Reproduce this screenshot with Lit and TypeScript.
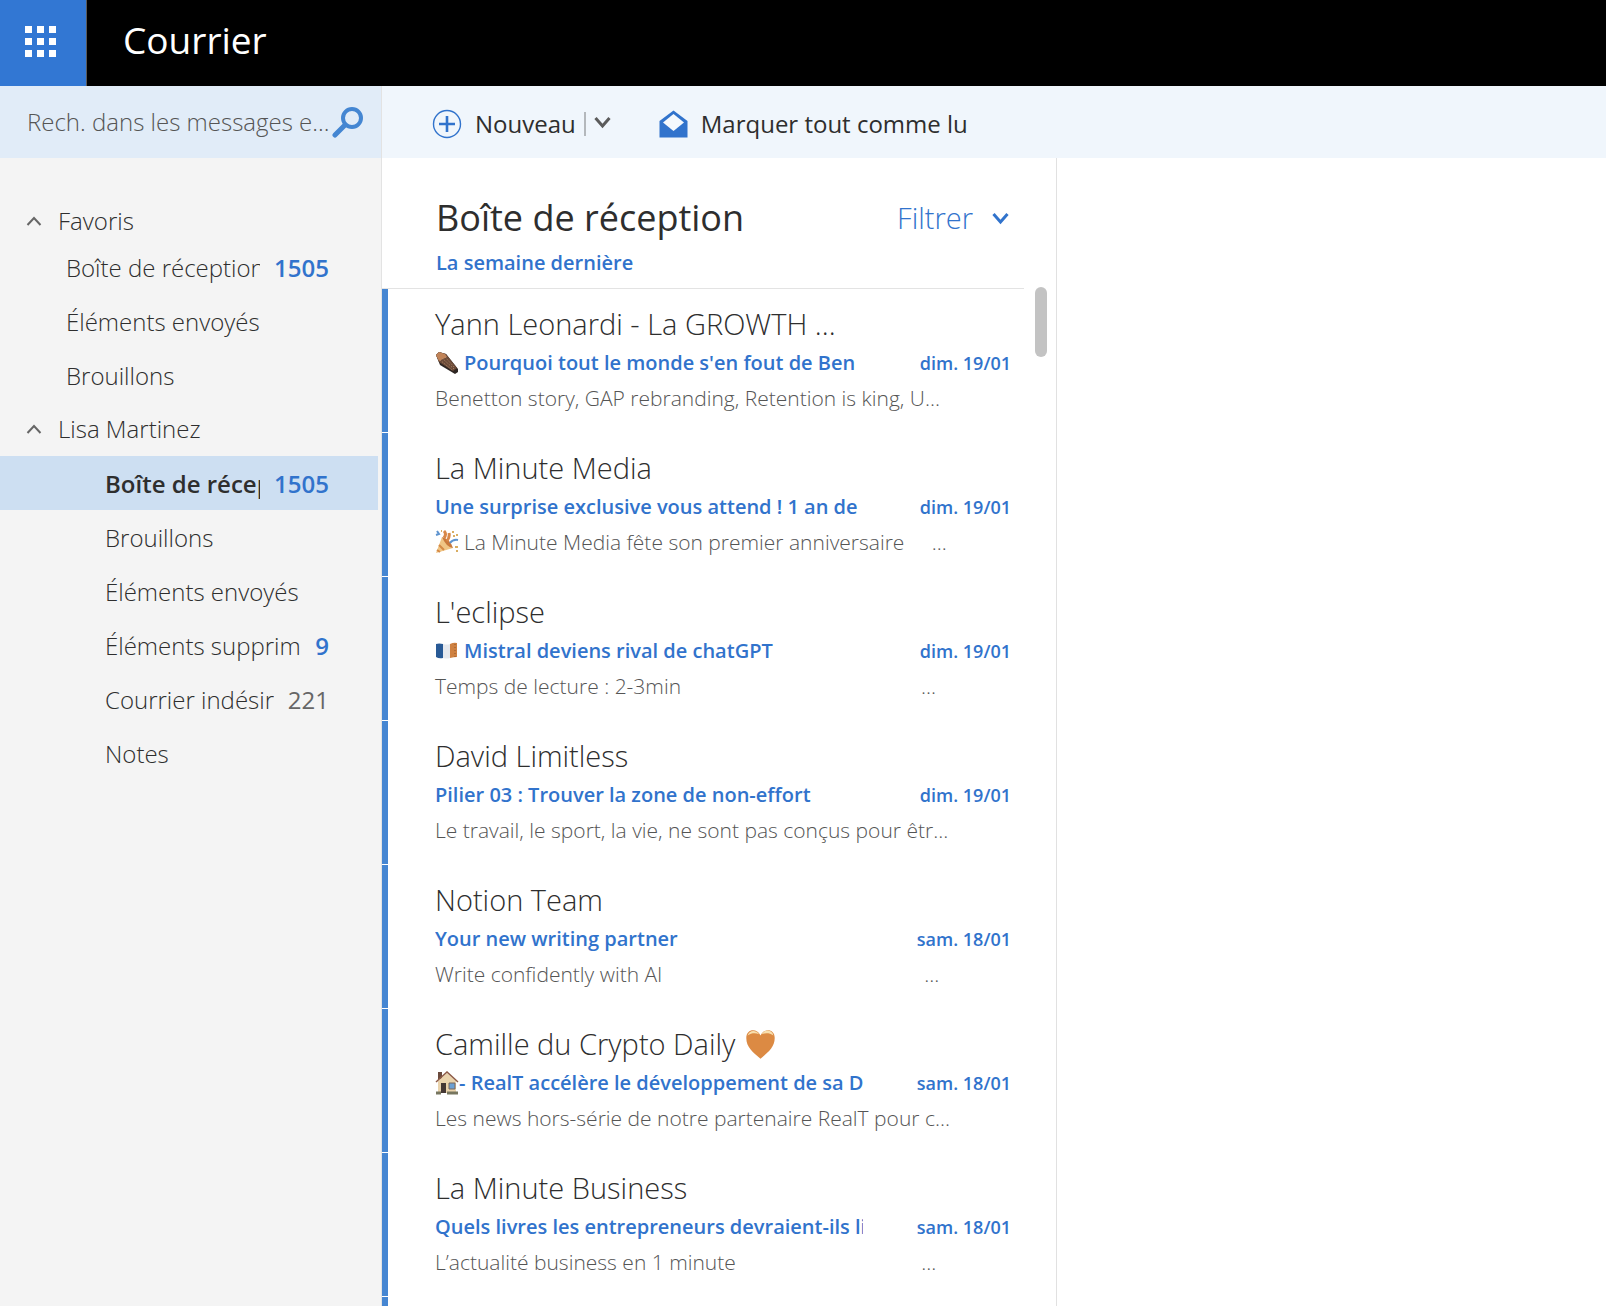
import { LitElement, html, css, svg, nothing } from "lit";
import { customElement } from "lit/decorators.js";
import { classMap } from "lit/directives/class-map.js";

type Emoji = "coffin" | "party" | "flag" | "house" | "heart";

interface Folder {
  label: string;
  count?: number;
  muted?: boolean;
  selected?: boolean;
}

interface Mail {
  sender: string;
  senderEmoji?: Emoji;
  subject: string;
  subjectEmoji?: Emoji;
  preview: string;
  previewEmoji?: Emoji;
  pad?: number;
  date: string;
}

const favourites: Folder[] = [
  { label: "Boîte de réception", count: 1505 },
  { label: "Éléments envoyés" },
  { label: "Brouillons" },
];

const account: Folder[] = [
  { label: "Boîte de réception", count: 1505, selected: true },
  { label: "Brouillons" },
  { label: "Éléments envoyés" },
  { label: "Éléments supprimés", count: 9 },
  { label: "Courrier indésirable", count: 221, muted: true },
  { label: "Notes" },
];

const mails: Mail[] = [
  {
    sender: "Yann Leonardi - La GROWTH ...",
    subjectEmoji: "coffin",
    subject: "Pourquoi tout le monde s'en fout de Ben",
    preview: "Benetton story, GAP rebranding, Retention is king, U...",
    date: "dim. 19/01",
  },
  {
    sender: "La Minute Media",
    subject: "Une surprise exclusive vous attend ! 1 an de",
    previewEmoji: "party",
    preview: "La Minute Media fête son premier anniversaire",
    pad: 5,
    date: "dim. 19/01",
  },
  {
    sender: "L'eclipse",
    subjectEmoji: "flag",
    subject: "Mistral deviens rival de chatGPT",
    preview: "Temps de lecture : 2-3min",
    pad: 44,
    date: "dim. 19/01",
  },
  {
    sender: "David Limitless",
    subject: "Pilier 03 : Trouver la zone de non-effort",
    preview: "Le travail, le sport, la vie, ne sont pas conçus pour êtr...",
    date: "dim. 19/01",
  },
  {
    sender: "Notion Team",
    subject: "Your new writing partner",
    preview: "Write confidently with AI",
    pad: 48,
    date: "sam. 18/01",
  },
  {
    sender: "Camille du Crypto Daily",
    senderEmoji: "heart",
    subjectEmoji: "house",
    subject: "- RealT accélère le développement de sa DAO",
    preview: "Les news hors-série de notre partenaire RealT pour c...",
    date: "sam. 18/01",
  },
  {
    sender: "La Minute Business",
    subject: "Quels livres les entrepreneurs devraient-ils lire",
    preview: "L’actualité business en 1 minute",
    pad: 34,
    date: "sam. 18/01",
  },
];

const emojiArt = {
  coffin: svg`
    <path d="M1 4 L4 1 L11 3 L23 18 L23 21 L20 23 L5 14 Z" fill="#2d2522"/>
    <path d="M1 4 L4 1 L11 3 L22 17 L18 20 L4 11 Z" fill="#6b4a38"/>
    <path d="M1 4 L4 1 L10 3 L12 6 L4 10 Z" fill="#c08358"/>
    <path d="M5 9 L17 19 M7 7 L19 18 M10 6 L20 17" stroke="#b8906f" stroke-width="1" stroke-dasharray="1 1.5"/>`,
  party: svg`
    <path d="M1 23 L7 7 L18 18 Z" fill="#f0c585"/>
    <path d="M7 7 Q15 9 18 18 Q11 17 7 7 Z" fill="#c9793c"/>
    <path d="M4 15 L9 20 M2 20 L5 22" stroke="#d58a45" stroke-width="2"/>
    <path d="M9 8 Q12 4 9 1 M12 11 Q15 7 14 3" stroke="#d88748" stroke-width="3" fill="none"/>
    <path d="M15 13 Q18 9 23 10 M2 1 L4 4 L1 5" stroke="#5f94cf" stroke-width="2" fill="none"/>
    <path d="M17 2 h2 M21 5 h2 M18 6 h2 M20 17 h3 M21 21 h2 M6 1 h1" stroke="#d9ad62" stroke-width="2"/>`,
  flag: svg`
    <path d="M1 5 Q4 4 8 5 L8 19 Q4 20 1 18 Z" fill="#285a96"/>
    <path d="M8 5 Q12 6 15 5 L15 19 Q12 20 8 19 Z" fill="#e6e9ee"/>
    <path d="M15 5 Q19 3 22 4 L22 18 Q19 18 15 19 Z" fill="#cf8141"/>
    <path d="M20 5 V18" stroke="#8f572e" stroke-width="1" stroke-dasharray="1 2"/>`,
  house: svg`
    <path d="M3 1 h4 v7 h-4 Z" fill="#6a4a3d"/>
    <path d="M3 10 L12 2 L21 10 V22 H3 Z" fill="#ead3ac"/>
    <path d="M1 11 L12 1 L23 11" fill="none" stroke="#8d5a45" stroke-width="1.500"/>
    <path d="M6 12 h5 v10 h-5 Z" fill="#453834"/>
    <path d="M14 12 h6 v6 h-6 Z" fill="#6c9fd2" stroke="#7a675c"/>
    <path d="M1 22 h5 M12 22 h11" stroke="#77765f" stroke-width="3"/>`,
  heart: svg`
    <path d="M12 23 C6 18 1 14 1 7 C1 0 9 -1 12 5 C15 -1 23 0 23 7 C23 14 18 18 12 23 Z" fill="#dc8a43"/>
    <path d="M2 5 C3 1 8 0 11 4 C8 3 5 3 2 5 Z M13 4 C15 0 21 0 22 5 C19 3 16 3 13 4 Z" fill="#f8dfae"/>`,
};

const emoji = (name: Emoji | undefined) =>
  name
    ? html`<svg class="emoji ${name}" viewBox="0 0 24 24" aria-hidden="true">${emojiArt[name]}</svg>`
    : nothing;

const chevron = (up: boolean) => html`
  <svg class="chevron" viewBox="0 0 16 16" aria-hidden="true">
    <path d=${up ? "M1.500 12 L8 5 L14.500 12" : "M1 4 L8 12 L15 4"} />
  </svg>`;

@customElement("app-root")
export class AppRoot extends LitElement {
  static styles = css`
    :host {
      --blue: #3173cc;
      --ink: #2e2e2e;
      display: flex;
      flex-direction: column;
      height: 100vh;
      overflow: hidden;
      background: #fff;
      color: var(--ink);
      font-family: "Open Sans", "Noto Sans", sans-serif;
      font-weight: 300;
    }
    * { box-sizing: border-box; }
    button {
      border: 0;
      padding: 0;
      background: none;
      color: inherit;
      font: inherit;
      display: flex;
      align-items: center;
      cursor: pointer;
    }
    a { color: inherit; text-decoration: none; }
    h1, h2, h3, ul, p { margin: 0; padding: 0; font-weight: inherit; }
    ul { list-style: none; }
    svg { display: block; flex: none; fill: none; }

    .top { display: flex; flex: none; height: 86px; background: #000; color: #fff; }
    .launcher { width: 87px; justify-content: center; padding: 0 5px 4px 0; background: #3277d3; border-right: 1px solid #5a5a5a; }
    .launcher svg { width: 31px; height: 31px; fill: #fff; }
    .brand { padding: 0 36px; font-size: 37px; line-height: 80px; font-weight: 400; }

    .body { display: flex; flex: 1; min-height: 0; }
    .side { display: flex; flex-direction: column; flex: none; width: 382px; background: #f4f4f4; border-right: 1px solid #e3e3e3; }
    .search { display: flex; flex: none; align-items: center; height: 72px; padding: 0 18px 0 27px; background: #e1ecf8; }
    .search input {
      flex: 1; min-width: 0; border: 0; padding: 0 0 2px; outline: 0; background: none;
      font: inherit; font-size: 24px; color: var(--ink);
    }
    .search input::placeholder { color: #555; opacity: 1; }
    .search svg { width: 31px; height: 31px; stroke: #4486d2; }

    .folders { padding-top: 43px; font-size: 24px; line-height: 56px; }
    .group { gap: 16px; width: 100%; height: 54px; padding-left: 26px; }
    .group.first { height: 39px; }
    .folders .chevron { width: 16px; height: 16px; stroke: #666; stroke-width: 2; }
    .folder { display: flex; gap: 14px; height: 54px; margin-right: 3px; padding: 0 49px 0 66px; }
    .nested .folder { padding-left: 105px; }
    .folder.selected { background: #cddff2; }
    .label { flex: 1; overflow: hidden; white-space: nowrap; }
    .selected .label { font-weight: 600; }
    .count { color: var(--blue); font-weight: 600; }
    .count.muted { color: #666; font-weight: 400; }

    .main { display: flex; flex-direction: column; flex: 1; min-width: 0; }
    .bar { display: flex; flex: none; align-items: center; height: 72px; padding: 3px 50px 0; background: #f0f6fc; font-size: 24px; font-weight: 400; }
    .tool { gap: 13px; }
    .new { padding-right: 8px; }
    .more { padding: 0 48px 4px 8px; }
    .more .chevron { width: 17px; height: 16px; stroke: #5b5b5b; stroke-width: 3; }
    .split { width: 2px; height: 24px; background: #b4b8bc; }
    .plus { width: 30px; height: 30px; stroke: var(--blue); }
    .open { width: 29px; height: 28px; }

    .panes { display: flex; flex: 1; min-height: 0; }
    .list { display: flex; flex: none; width: 675px; border-right: 1px solid #e1e1e1; }
    .column { display: flex; flex-direction: column; flex: 1; min-width: 0; }
    .head { display: flex; flex: none; justify-content: space-between; align-items: center; height: 82px; padding: 38px 15px 0 54px; }
    .head h2 { font-size: 36px; line-height: 44px; font-weight: 400; }
    .filter { gap: 19px; font-size: 29px; line-height: 44px; color: var(--blue); }
    .filter .chevron { width: 17px; height: 16px; stroke: var(--blue); stroke-width: 3; }
    .period { flex: none; height: 49px; padding: 7px 54px; border-bottom: 1px solid #e3e3e3; font-size: 20px; line-height: 32px; font-weight: 600; color: var(--blue); }
    .scroll { flex: none; width: 32px; padding: 129px 9px 0 11px; }
    .thumb { height: 70px; border-radius: 6px; background: #c3c3c3; }

    .mails { display: flex; flex-direction: column; flex: 1; min-height: 0; overflow: hidden; }
    .mail { flex: none; height: 144px; padding-bottom: 1px; }
    .card { display: block; height: 143px; padding: 14px 13px 0 47px; border-left: 6px solid #4686d2; white-space: nowrap; overflow: hidden; }
    .next { flex: 1; border-left: 6px solid #4686d2; }
    .sender { display: flex; align-items: center; gap: 10px; font-size: 29px; line-height: 42px; }
    .line { display: flex; justify-content: space-between; align-items: center; font-size: 20px; line-height: 36px; font-weight: 600; color: var(--blue); }
    .subject { display: flex; align-items: center; gap: 5px; flex: none; width: 428px; overflow: hidden; }
    .date { font-size: 18px; }
    .preview { display: flex; align-items: center; gap: 5px; font-size: 21px; line-height: 34px; color: #555; }
    .emoji { width: 24px; height: 24px; }
    .emoji.heart { width: 31px; height: 31px; }
    .emoji.house { margin-right: -5px; }
    .reading { flex: 1; min-width: 0; }
  `;

  private folder(f: Folder) {
    return html`
      <li>
        <a href="#" class=${classMap({ folder: true, selected: !!f.selected })}>
          <span class="label">${f.label}</span>
          ${f.count
            ? html`<span class=${classMap({ count: true, muted: !!f.muted })}>${f.count}</span>`
            : nothing}
        </a>
      </li>`;
  }

  private mail(m: Mail) {
    return html`
      <li class="mail">
        <a class="card" href="#">
          <h3 class="sender"><span>${m.sender}</span>${emoji(m.senderEmoji)}</h3>
          <div class="line">
            <span class="subject">${emoji(m.subjectEmoji)}<span>${m.subject}</span></span>
            <span class="date">${m.date}</span>
          </div>
          <p class="preview">
            ${emoji(m.previewEmoji)}<span>${m.preview}${m.pad ? "\u00a0".repeat(m.pad) + "..." : ""}</span>
          </p>
        </a>
      </li>`;
  }

  render() {
    return html`
      <header class="top">
        <button class="launcher" aria-label="Lanceur d’applications">
          <svg viewBox="0 0 31 31">
            ${[0, 12, 24].map((y) => [0, 12, 24].map((x) => svg`<rect x=${x} y=${y} width="7" height="7"/>`))}
          </svg>
        </button>
        <h1 class="brand">Courrier</h1>
      </header>
      <div class="body">
        <aside class="side">
          <form class="search" role="search">
            <input type="text" aria-label="Rechercher" placeholder="Rech. dans les messages e..." />
            <button type="button" aria-label="Lancer la recherche">
              <svg viewBox="0 0 31 31" stroke-width="4" stroke-linecap="round">
                <circle cx="20" cy="11" r="9" />
                <path d="M13 18 L3 28" stroke-width="5" />
              </svg>
            </button>
          </form>
          <nav class="folders">
            <button class="group first">${chevron(true)}<span>Favoris</span></button>
            <ul>${favourites.map((f) => this.folder(f))}</ul>
            <button class="group">${chevron(true)}<span>Lisa Martinez</span></button>
            <ul class="nested">${account.map((f) => this.folder(f))}</ul>
          </nav>
        </aside>
        <main class="main">
          <div class="bar">
            <button class="tool new">
              <svg class="plus" viewBox="0 0 30 30">
                <circle cx="15" cy="15" r="13.500" stroke-width="1.400" />
                <path d="M7 15 H23 M15 7 V23" stroke-width="2.600" />
              </svg>
              <span>Nouveau</span>
            </button>
            <span class="split"></span>
            <button class="more" aria-label="Autres options">${chevron(false)}</button>
            <button class="tool">
              <svg class="open" viewBox="0 0 29 28">
                <path d="M0.500 27.500 V11 L14.500 0.500 L28.500 11 V27.500 Z" fill="#3173cc" />
                <path d="M14.500 4 L25 12.500 L14.500 21 L4 12.500 Z" fill="#f5f9fd" />
              </svg>
              <span>Marquer tout comme lu</span>
            </button>
          </div>
          <div class="panes">
            <section class="list">
              <div class="column">
                <div class="head">
                  <h2>Boîte de réception</h2>
                  <button class="filter"><span>Filtrer</span>${chevron(false)}</button>
                </div>
                <p class="period">La semaine dernière</p>
                <ul class="mails">
                  ${mails.map((m) => this.mail(m))}
                  <li class="next"></li>
                </ul>
              </div>
              <div class="scroll"><div class="thumb"></div></div>
            </section>
            <section class="reading"></section>
          </div>
        </main>
      </div>`;
  }
}
